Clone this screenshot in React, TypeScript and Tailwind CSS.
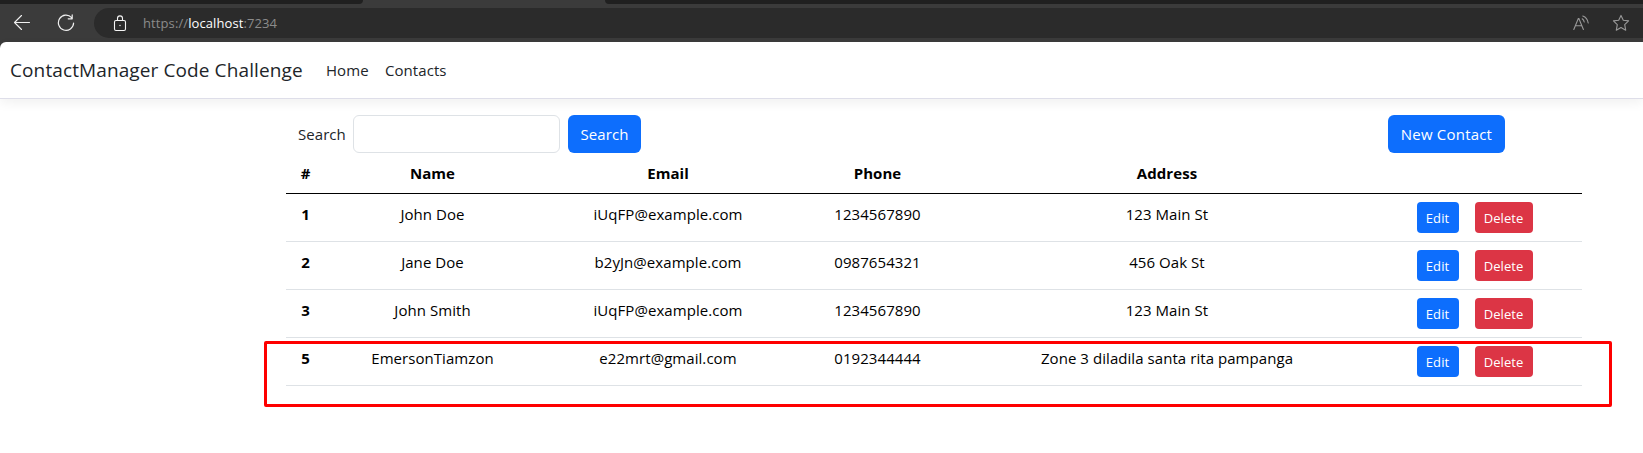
import React from "react";

type Contact = { id: number; name: string; email: string; phone: string; address: string };

const contacts: Contact[] = [
  { id: 1, name: "John Doe", email: "iUqFP@example.com", phone: "1234567890", address: "123 Main St" },
  { id: 2, name: "Jane Doe", email: "b2yJn@example.com", phone: "0987654321", address: "456 Oak St" },
  { id: 3, name: "John Smith", email: "iUqFP@example.com", phone: "1234567890", address: "123 Main St" },
  { id: 5, name: "EmersonTiamzon", email: "e22mrt@gmail.com", phone: "0192344444", address: "Zone 3 diladila santa rita pampanga" },
];

function BrowserBar() {
  return (
    <div className="h-[42px] bg-[#3b3b3b]">
      <div className="flex h-1 justify-between">
        <div className="w-[363px] rounded-br-[6px] bg-[#202020]" />
        <div className="w-[1038px] rounded-bl-[6px] bg-[#202020]" />
      </div>
      <div className="flex h-[38px] items-center">
        <svg className="ml-[13px] h-[18px] w-[18px] shrink-0" viewBox="0 0 18 18" fill="none" stroke="#f0f0f0" strokeWidth="1.1" strokeLinecap="round" strokeLinejoin="round">
          <path d="M16.5 8.5H1.5M8.5 1.5l-7 7 7 7" />
        </svg>
        <svg className="ml-[26px] h-[18px] w-[18px] shrink-0" viewBox="0 0 18 18" fill="none" stroke="#f0f0f0" strokeWidth="1.2" strokeLinecap="round" strokeLinejoin="round">
          <path d="M14.6 3.6A7.6 7.6 0 1 0 16.6 9M15.2 .9v3.9h-4" />
        </svg>
        <div className="ml-[19px] flex h-[30px] w-[1549px] items-center rounded-l-full rounded-r-[13px] bg-[#2b2b2b]">
          <svg className="ml-[19px] h-[17px] w-[14px] shrink-0" viewBox="0 0 14 17" fill="none" stroke="#f5f5f5" strokeWidth="1.1">
            <rect x="1.5" y="5.5" width="11" height="10" rx="1.5" />
            <path d="M4.5 5.5V3.4a2.5 2.5 0 0 1 5 0v2.1" />
            <rect x="6.4" y="9.9" width="1.2" height="1.2" fill="#f5f5f5" stroke="none" />
          </svg>
          <div className="ml-[16px] text-[13px] leading-5 tracking-[0.1px] text-[#8b8b8b]">
            https://<span className="text-white">localhost</span>:7234
          </div>
          <svg className="ml-auto h-4 w-4 shrink-0" viewBox="0 0 16 16" fill="none" stroke="#999" strokeWidth="1.1" strokeLinecap="round">
            <path d="M.8 14.5 5.3 3.5h.6l4.5 11M2.4 10.8h6.4M9.2 3.8q1.7 1.2 2 3.2M9.8 1q4.6 1.6 5.4 7" />
          </svg>
          <svg className="mr-[13px] ml-[23px] h-[18px] w-[18px] shrink-0" viewBox="0 0 18 18" fill="none" stroke="#999" strokeWidth="1.1" strokeLinejoin="round">
            <path d="m9 1.4 2.3 4.8 5.3.7-3.9 3.7 1 5.6L9 13.6l-4.7 2.6 1-5.6-3.9-3.7 5.3-.7Z" />
          </svg>
        </div>
      </div>
    </div>
  );
}

function ContactRow({ contact }: { contact: Contact }) {
  return (
    <tr className="h-12 border-b border-[#dee2e6] align-top leading-6">
      <td className="pt-2 font-bold">{contact.id}</td>
      <td className="pt-2">{contact.name}</td>
      <td className="pt-2">{contact.email}</td>
      <td className="pt-2">{contact.phone}</td>
      <td className="pt-2">{contact.address}</td>
      <td className="pt-2">
        <div className="flex h-[31px] justify-center gap-4 pr-2 text-[13px] text-white">
          <button className="w-[42px] rounded bg-[#0d6efd] pt-px">Edit</button>
          <button className="w-[58px] rounded bg-[#dc3545] pt-px">Delete</button>
        </div>
      </td>
    </tr>
  );
}

export default function App() {
  return (
    <div className="relative h-[453px] w-[1643px] overflow-hidden bg-white font-['Open_Sans','Noto_Sans',sans-serif] text-[15px] tracking-[0.06px] text-[#212529]">
      <BrowserBar />
      <div className="bg-[#3b3b3b]">
        <nav className="flex h-[57px] items-center rounded-tl-[6px] border-b border-[#dedee9] bg-white pl-[10px] shadow-[0_4px_12px_rgba(0,0,0,0.06)]">
          <span className="w-[292px] pt-px text-[19px] tracking-[0.11px] whitespace-nowrap">ContactManager Code Challenge</span>
          <a className="ml-6 w-[43px]">Home</a>
          <a className="ml-4">Contacts</a>
        </nav>
      </div>
      <main className="mt-4 ml-[286px] w-[1296px]">
        <div className="flex h-[38px] items-center pl-3">
          <label className="w-[47px]">Search</label>
          <input className="ml-2 h-[38px] w-[207px] rounded-md border border-[#dee2e6] px-3" />
          <button className="ml-2 h-[38px] w-[73px] rounded-md bg-[#0d6efd] text-white">Search</button>
          <button className="mr-[77px] ml-auto h-[38px] w-[117px] rounded-md bg-[#0d6efd] tracking-[0.2px] text-white">New Contact</button>
        </div>
        <table className="w-full table-fixed border-collapse text-center text-black">
          <colgroup>
            <col className="w-[39px]" />
            <col className="w-[215px]" />
            <col className="w-[256px]" />
            <col className="w-[163px]" />
            <col className="w-[416px]" />
            <col className="w-[207px]" />
          </colgroup>
          <thead>
            <tr className="h-[40px] border-b border-black leading-6">
              <th>#</th>
              <th>Name</th>
              <th>Email</th>
              <th>Phone</th>
              <th>Address</th>
              <th />
            </tr>
          </thead>
          <tbody>
            {contacts.map((c) => (
              <ContactRow key={c.id} contact={c} />
            ))}
          </tbody>
        </table>
      </main>
      <div className="pointer-events-none absolute top-[341px] left-[264px] h-[66px] w-[1348px] rounded-[2px] border-[3px] border-[#fe0000]" />
    </div>
  );
}
